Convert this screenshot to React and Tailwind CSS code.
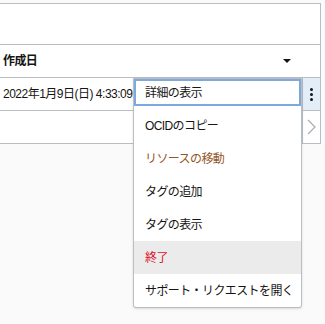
import React from 'react';

const items = [
  { label: '詳細の表示', color: 'text-[#161513]', focus: true },
  { label: 'OCIDのコピー', color: 'text-[#161513]' },
  { label: 'リソースの移動', color: 'text-[#93562b]' },
  { label: 'タグの追加', color: 'text-[#161513]' },
  { label: 'タグの表示', color: 'text-[#161513]' },
  { label: '終了', color: 'text-[#e0102e]', hover: true },
  { label: 'サポート・リクエストを開く', color: 'text-[#161513]' },
];

export default function App() {
  return (
    <div
      className="relative w-[325px] h-[324px] bg-[#fafafa] overflow-hidden text-[12px] text-[#161513]"
      style={{ fontFamily: '"Liberation Sans", "Noto Sans CJK JP", sans-serif' }}
    >
      {/* tabla */}
      <div className="mt-[3px] w-[321px] bg-white border-y border-r border-[#b9bec5]">
        <div className="h-[41px] border-b border-[#b9bec5]"></div>

        {/* cabecera */}
        <div className="h-[33px] flex items-center border-b border-[#b9bec5]">
          <span className="pl-[3px] font-bold tracking-[-0.6px]">作成日</span>
          <span className="ml-auto mr-[29px] w-0 h-0 border-l-[4px] border-r-[4px] border-t-[4px] border-l-transparent border-r-transparent border-t-[#161513]"></span>
        </div>

        {/* fila */}
        <div className="h-[33px] flex border-b border-[#b9bec5]">
          <span className="flex-1 flex items-center pl-[3px] tracking-[-0.5px]">2022年1月9日(日) 4:33:09</span>
          <div className="w-[18px] bg-[#e4eef9] border-l border-[#b9bec5] flex flex-col items-center justify-center gap-[2px]">
            <span className="w-[3px] h-[3px] rounded-full bg-[#161513]"></span>
            <span className="w-[3px] h-[3px] rounded-full bg-[#161513]"></span>
            <span className="w-[3px] h-[3px] rounded-full bg-[#161513]"></span>
          </div>
        </div>

        <div className="h-[32px] flex">
          <div className="flex-1"></div>
          <div className="w-[18px] border-l border-[#b9bec5] flex items-center justify-center">
            <svg width="9" height="16" viewBox="0 0 9 16" fill="none">
              <path d="M1 1 L8 8 L1 15" stroke="#a9adb3" strokeWidth="1.2" />
            </svg>
          </div>
        </div>
      </div>

      {/* menú */}
      <div className="absolute left-[133px] top-[78px] w-[169px] bg-white border border-[#b9bec5] rounded-b-[3px] shadow-sm">
        {items.map((it) => (
          <div
            key={it.label}
            className={`flex items-center tracking-[-0.6px] ${it.color} ${it.hover ? 'bg-[#ebebeb]' : ''} ${it.focus ? 'border-2 border-[#7ea9de] h-[27px] mb-[3px] pl-[9px]' : 'h-[33px] pl-[11px]'}`}
          >
            {it.label}
          </div>
        ))}
      </div>
    </div>
  );
}
